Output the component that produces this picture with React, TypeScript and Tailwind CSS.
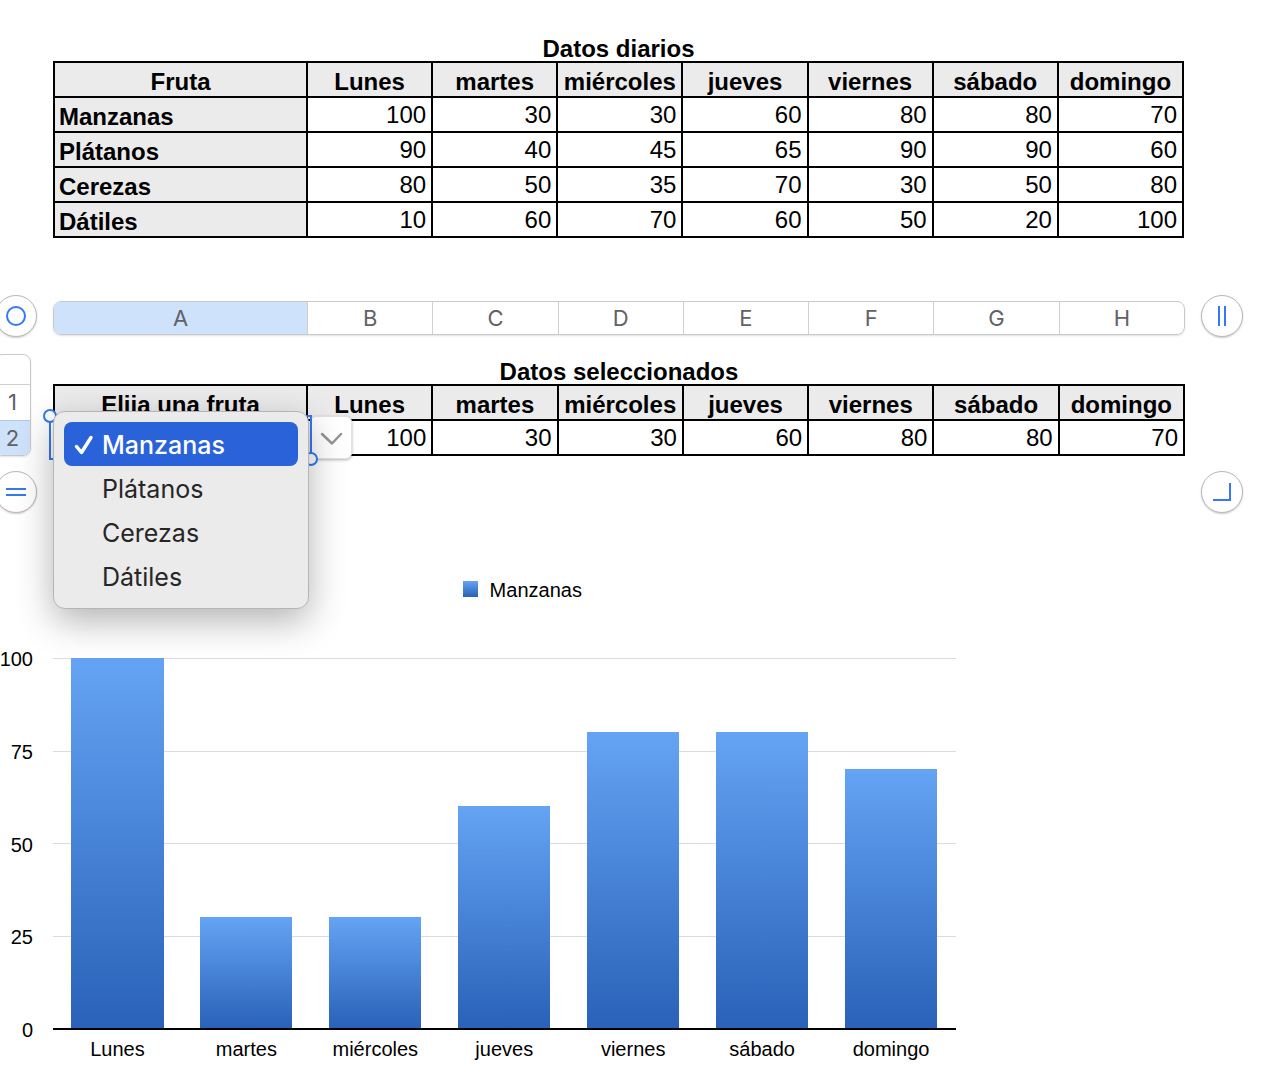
import React, { useState } from "react";

const days = [
  "Lunes",
  "martes",
  "miércoles",
  "jueves",
  "viernes",
  "sábado",
  "domingo",
];

const fruits = [
  { name: "Manzanas", values: [100, 30, 30, 60, 80, 80, 70] },
  { name: "Plátanos", values: [90, 40, 45, 65, 90, 90, 60] },
  { name: "Cerezas", values: [80, 50, 35, 70, 30, 50, 80] },
  { name: "Dátiles", values: [10, 60, 70, 60, 50, 20, 100] },
];

const letters = ["B", "C", "D", "E", "F", "G", "H"];
const ticks = [100, 75, 50, 25, 0];

const tableClass =
  "w-full table-fixed border-collapse border-2 border-black text-2xl text-black";
const captionClass = "pt-0.5 text-2xl leading-6 font-bold";
const headClass =
  "border-2 border-black bg-[#ebebeb] px-1 pt-1 pb-0 leading-[29px] font-bold";
const cellClass =
  "border-2 border-black py-0 pr-[5px] pl-1 text-right leading-[33px]";

const HeadRow: React.FC<{ title: string }> = ({ title }) => (
  <thead>
    <tr>
      <th scope="col" className={`${headClass} w-[253px]`}>
        {title}
      </th>
      {days.map((day) => (
        <th scope="col" key={day} className={headClass}>
          {day}
        </th>
      ))}
    </tr>
  </thead>
);

const RoundHandle: React.FC<{
  label: string;
  className?: string;
  children: React.ReactNode;
}> = ({ label, className = "", children }) => (
  <button
    type="button"
    aria-label={label}
    className={`flex h-[42px] w-[42px] shrink-0 items-center justify-center rounded-full border border-[#b9b9b9] bg-white shadow-[0_1px_2px_rgba(0,0,0,0.2)] ${className}`}
  >
    <svg
      width="24"
      height="24"
      viewBox="0 0 24 24"
      fill="none"
      stroke="#3478f6"
      strokeWidth="2"
    >
      {children}
    </svg>
  </button>
);

const Chart: React.FC<{ name: string; values: number[] }> = ({
  name,
  values,
}) => (
  <section className="mt-[66px] w-3/4 text-xl leading-[22px] text-black">
    {/* Legend */}
    <div className="ml-[53px] flex items-baseline justify-center gap-3 pl-9">
      <span className="h-4 w-[15px] bg-linear-to-b from-[#65a3f4] to-[#2962b8]" />
      <span>{name}</span>
    </div>

    <div className="mt-[47px] flex">
      {/* Value axis */}
      <div className="flex h-[393px] w-[53px] shrink-0 flex-col items-end justify-between pr-5">
        {ticks.map((tick) => (
          <span key={tick}>{tick}</span>
        ))}
      </div>

      <div className="min-w-0 flex-1 pt-[10px]">
        <div className="relative h-[372px] border-b-2 border-black">
          <div className="absolute inset-0 grid grid-rows-4">
            {ticks.slice(0, 4).map((tick) => (
              <div key={tick} className="border-t border-[#dcdcdc]" />
            ))}
          </div>
          <div className="relative grid h-full grid-cols-7">
            {values.map((value, i) => (
              <div key={days[i]} className="flex items-end justify-center">
                <div
                  className="w-5/7 bg-linear-to-b from-[#65a3f4] to-[#2962b8]"
                  style={{ height: `${value}%` }}
                />
              </div>
            ))}
          </div>
        </div>
        <div className="grid grid-cols-7 pt-2 text-center">
          {days.map((day) => (
            <span key={day}>{day}</span>
          ))}
        </div>
      </div>
    </div>
  </section>
);

const App: React.FC = () => {
  const [selected, setSelected] = useState(0);
  const [open, setOpen] = useState(true);
  const fruit = fruits[selected];

  return (
    <main className="overflow-x-hidden bg-white pt-[35px] font-['Liberation_Sans',Arial,sans-serif]">
      {/* Daily data */}
      <div className="pr-[90px] pl-[53px]">
        <table className={tableClass}>
          <caption className={captionClass}>Datos diarios</caption>
          <HeadRow title="Fruta" />
          <tbody>
            {fruits.map((row) => (
              <tr key={row.name}>
                <th scope="row" className={`${headClass} text-left`}>
                  {row.name}
                </th>
                {row.values.map((value, i) => (
                  <td key={days[i]} className={cellClass}>
                    {value}
                  </td>
                ))}
              </tr>
            ))}
          </tbody>
        </table>
      </div>

      {/* Column letters */}
      <div className="mt-[57px] flex items-start font-['Inter',sans-serif] text-[22px] text-[#616166]">
        <div className="w-[53px] shrink-0">
          <RoundHandle label="Seleccionar tabla" className="-ml-[5px]">
            <circle cx="12" cy="12" r="9" />
          </RoundHandle>
        </div>
        <div className="mt-[6px] flex h-[34px] min-w-0 flex-1 overflow-hidden rounded-lg border border-[#c9c9c9] text-center leading-8 shadow-[0_1px_2px_rgba(0,0,0,0.12)]">
          <div className="w-[253px] shrink-0 bg-[#cfe2fc]">A</div>
          {letters.map((letter) => (
            <div key={letter} className="flex-1 border-l border-[#d0d0d0]">
              {letter}
            </div>
          ))}
        </div>
        <div className="w-[89px] shrink-0 pl-4">
          <RoundHandle label="Añadir columnas">
            <path d="M9 2v20M15 2v20" />
          </RoundHandle>
        </div>
      </div>

      {/* Selected data */}
      <div className="mt-[17px] flex items-start">
        <div className="w-[53px] shrink-0">
          <div className="-ml-[6px] h-[102px] w-[37px] overflow-hidden rounded-lg border border-[#c9c9c9] text-center font-['Inter',sans-serif] text-[22px] leading-[35px] text-[#616166] shadow-[0_1px_2px_rgba(0,0,0,0.12)]">
            <div className="h-[29px]" />
            <div className="border-t border-[#d0d0d0]">1</div>
            <div className="border-t border-[#b4c8e4] bg-[#cfe2fc]">2</div>
          </div>
        </div>

        <div className="relative mt-1 min-w-0 flex-1">
          <table className={tableClass}>
            <caption className={captionClass}>Datos seleccionados</caption>
            <HeadRow title="Elija una fruta" />
            <tbody>
              <tr>
                <td className={cellClass}>{open ? "" : fruit.name}</td>
                {fruit.values.map((value, i) => (
                  <td key={days[i]} className={cellClass}>
                    {value}
                  </td>
                ))}
              </tr>
            </tbody>
          </table>

          <button
            type="button"
            aria-label="Elegir fruta"
            aria-expanded={open}
            onClick={() => setOpen(!open)}
            className="absolute top-[58px] left-[257px] flex h-[43px] w-[42px] items-center justify-center rounded-md border border-[#e2e2e2] bg-white pt-0.5 shadow-[0_1px_3px_rgba(0,0,0,0.3)]"
          >
            <svg
              width="24"
              height="14"
              viewBox="0 0 24 14"
              fill="none"
              stroke="#949494"
              strokeWidth="2.500"
              strokeLinecap="round"
              strokeLinejoin="round"
            >
              <path d="M3 2l10 9.500l9-9.500" />
            </svg>
          </button>

          {/* Cell selection frame */}
          <div className="pointer-events-none absolute top-[57px] -left-1 h-[45px] w-[263px] border-2 border-[#3478f6]">
            <span className="absolute -top-2 -left-2 h-[14px] w-[14px] rounded-full border-2 border-[#3478f6] bg-white" />
            <span className="absolute -right-2 -bottom-2 h-[14px] w-[14px] rounded-full border-2 border-[#3478f6] bg-white" />
          </div>

          {open && (
            <div
              role="menu"
              className="absolute top-[53px] left-0 z-10 w-64 rounded-xl border border-[#b5b5b5] bg-[#ebebeb] p-[10px] font-['Inter',sans-serif] text-[25px] text-[#262626] shadow-[0_12px_36px_rgba(0,0,0,0.3)]"
            >
              {fruits.map((item, i) => (
                <button
                  type="button"
                  role="menuitemradio"
                  aria-checked={i === selected}
                  key={item.name}
                  onClick={() => setSelected(i)}
                  className={`flex h-11 w-full items-center rounded-lg pl-[10px] text-left ${
                    i === selected ? "bg-[#2962d9] font-medium text-white" : ""
                  }`}
                >
                  <span className="w-7 shrink-0">
                    {i === selected && (
                      <svg
                        width="20"
                        height="22"
                        viewBox="0 0 20 22"
                        fill="none"
                        stroke="currentColor"
                        strokeWidth="3.500"
                        strokeLinecap="round"
                        strokeLinejoin="round"
                      >
                        <path d="M2.500 13.500l5 6l9.500-15" />
                      </svg>
                    )}
                  </span>
                  <span className="pt-1">{item.name}</span>
                </button>
              ))}
            </div>
          )}
        </div>
        <div className="w-[89px] shrink-0" />
      </div>

      {/* Row and corner handles */}
      <div className="mt-[15px] flex justify-between">
        <RoundHandle label="Añadir filas" className="-ml-[5px]">
          <path d="M2 9h20M2 15h20" />
        </RoundHandle>
        <RoundHandle label="Cambiar tamaño" className="mr-[31px]">
          <path d="M3 20h17V3" />
        </RoundHandle>
      </div>

      <Chart name={fruit.name} values={fruit.values} />
    </main>
  );
};

export default App;
